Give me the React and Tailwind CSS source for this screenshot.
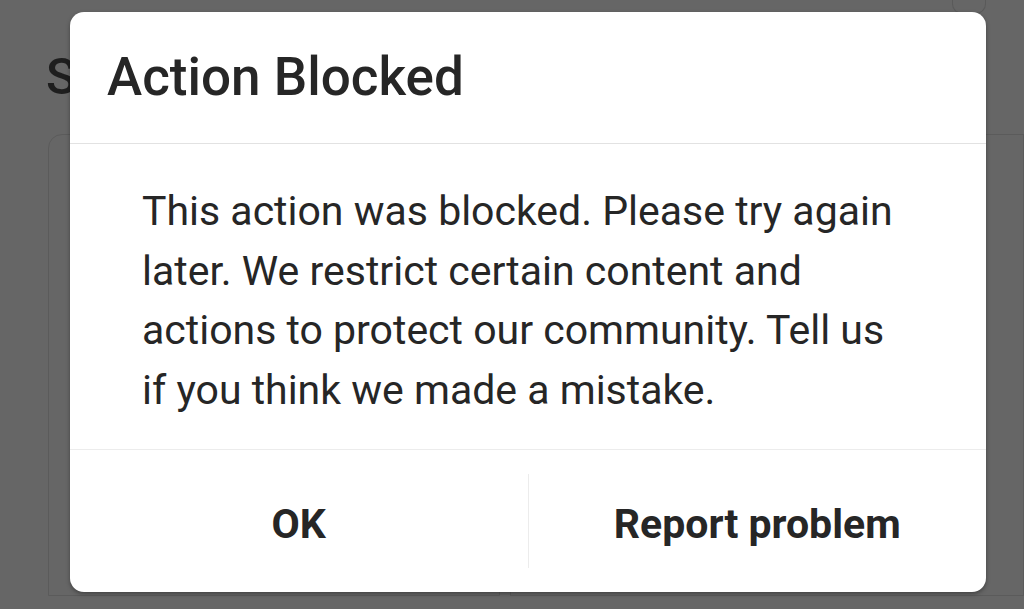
import React from 'react'

const font = { fontFamily: 'Roboto, "Noto Sans", sans-serif' }

const Backdrop = () => (
  <div className="absolute inset-0 bg-[#666666]">
    <div className="pl-[46px] pt-[52px] text-[50px] leading-none font-medium text-[#1e1e1e]">
      S
    </div>
    <div className="absolute right-[38px] top-0 w-[34px] h-[14px] border-x border-b border-[#5a5a5a] rounded-b-[10px]" />
    <div className="mt-[32px] ml-[48px] flex gap-[10px]">
      <div className="w-[457px] h-[462px] border border-[#5b5b5b] rounded-tl-[14px]" />
      <div className="w-[520px] h-[462px] border border-[#5b5b5b]" />
    </div>
  </div>
)

const ActionBlockedDialog = () => (
  <div className="absolute left-[70px] top-[12px] w-[916px] h-[580px] bg-white rounded-[14px] shadow-[0_2px_4px_rgba(0,0,0,0.35)] flex flex-col text-[#262626]">
    <div className="h-[132px] flex items-center pl-[37px] border-b border-[#e2e2e2]">
      <h1 className="text-[53px] font-medium leading-none">Action Blocked</h1>
    </div>
    <div className="h-[306px] pl-[72px] pt-[38px] border-b border-[#ececec]">
      <p className="w-[770px] text-[41px] leading-[59.5px]">
        This action was blocked. Please try again later. We restrict certain content and
        actions to protect our community. Tell us if you think we made a mistake.
      </p>
    </div>
    <div className="flex-1 flex items-stretch py-[24px]">
      <button className="flex-1 pt-[7px] text-[41px] font-bold">OK</button>
      <div className="w-px bg-[#ececec]" />
      <button className="flex-1 pt-[7px] text-[41px] font-bold">Report problem</button>
    </div>
  </div>
)

export default function App() {
  return (
    <div className="relative w-[1024px] h-[609px] overflow-hidden" style={font}>
      <Backdrop />
      <ActionBlockedDialog />
    </div>
  )
}
